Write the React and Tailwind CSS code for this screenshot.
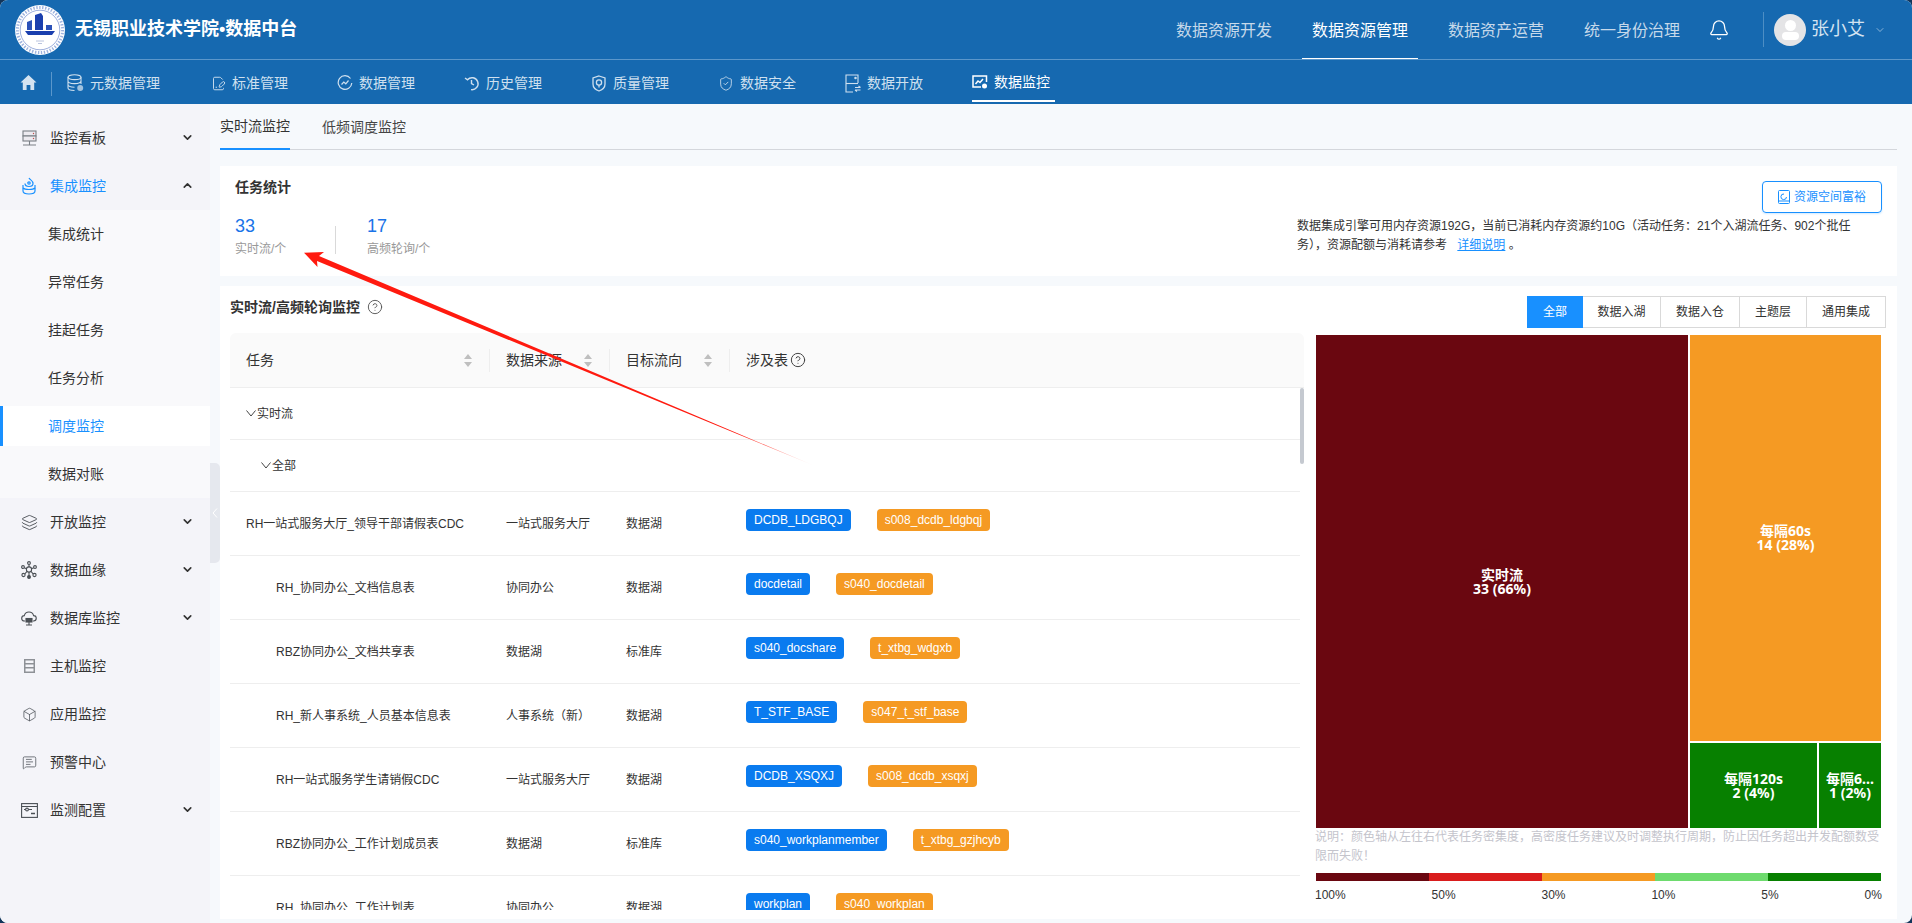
import React from 'react'
import { Bell, Box, ChevronDown, ChevronUp, CircleHelp, FilePenLine, Layers, MessageSquareText, ShieldCheck } from 'lucide-react'

const HomeIcon = () => (
    <svg width="17" height="17" viewBox="0 0 17 17" fill="#d4e3f1">
        <path d="M8.5 1 L16.5 8.6 H14.2 V16 H10.4 V11 H6.6 V16 H2.8 V8.6 H.5 Z" />
    </svg>
)
const DbIcon = () => (
    <svg width="17" height="18" viewBox="0 0 17 18" fill="none" stroke="currentColor" strokeWidth="1.1">
        <ellipse cx="7.5" cy="3.2" rx="6.5" ry="2.4" />
        <path d="M1 3.2 V14 C1 15.5 4 16.5 7.5 16.5 M14 3.2 V10 M1 7 C1 8.6 4 9.6 7.5 9.6 C11 9.6 14 8.6 14 7 M1 10.6 C1 12.2 4 13.2 7.5 13.2" />
        <circle cx="13.2" cy="14" r="3" fill="currentColor" stroke="none" opacity=".75" />
    </svg>
)
const PulseIcon = () => (
    <svg width="16" height="16" viewBox="0 0 16 16" fill="none" stroke="currentColor" strokeWidth="1.2">
        <path d="M13.5 3.5 A6.8 6.8 0 1 0 14.8 8" />
        <path d="M4.5 9.5 L6.8 7 L8.8 8.8 L11.5 5.5" />
    </svg>
)
const HistoryIcon = () => (
    <svg width="16" height="16" viewBox="0 0 16 16" fill="none" stroke="currentColor" strokeWidth="1.4">
        <path d="M1 3 L3.5 4.8 A6 6 0 1 1 7 14.6" />
        <path d="M7.5 5 V8.5 L10 10" />
    </svg>
)
const ShieldIcon = () => (
    <svg width="16" height="17" viewBox="0 0 16 17" fill="none" stroke="currentColor" strokeWidth="1.3">
        <path d="M8 1 L14 3 V9 C14 12.5 11 15 8 16 C5 15 2 12.5 2 9 V3 Z" />
        <circle cx="8" cy="7.5" r="2.6" />
        <path d="M8 10 V12.5" />
    </svg>
)
const OpenIcon = () => (
    <svg width="16" height="19" viewBox="0 0 16 19" fill="none" stroke="currentColor" strokeWidth="1.1">
        <path d="M13 9 V1 H1 V18 H8" />
        <path d="M1 9.5 H13" />
        <path d="M10 13.5 H15.5 M15.5 16 H10 M13.5 12 L15.5 13.5 M12 17.5 L10 16" />
        <circle cx="10.5" cy="4" r=".7" fill="currentColor" />
    </svg>
)
const ScreenIcon = () => (
    <svg width="16" height="15" viewBox="0 0 16 15" fill="none" stroke="currentColor" strokeWidth="1.5">
        <path d="M9 12 H1 V1 H14.5 V7" />
        <path d="M3.5 9 L6 6 L8 7.5 L11 4" />
        <circle cx="12.5" cy="11" r="2.5" fill="currentColor" stroke="none" />
    </svg>
)
const MonitorIcon = () => (
    <svg width="15" height="17" viewBox="0 0 15 17" fill="none" stroke="#7a7f86" strokeWidth="1.1">
        <rect x="1" y="1" width="13" height="5" fill="#eceaf0" />
        <rect x="1" y="6" width="13" height="5" fill="#eceaf0" />
        <path d="M7.5 11 V15 M1 15 H14" />
        <circle cx="11.5" cy="3.5" r=".7" fill="#c0504d" stroke="none" />
        <circle cx="11.5" cy="8.5" r=".7" fill="#c0504d" stroke="none" />
    </svg>
)
const IntegrationIcon = () => (
    <svg width="14" height="18" viewBox="0 0 14 18" fill="none" stroke="#1890ff" strokeWidth="1.2">
        <path d="M7 1 C8 3 11 3.5 11 6.5 C11 8.5 9 9.5 7 9.5 C5 9.5 3 8.5 3 6.5" />
        <circle cx="7" cy="6" r="1.2" />
        <path d="M1 8 V14 C1 16 4 17 7 17 C10 17 13 16 13 14 V8" />
        <path d="M1 11 C3 13 11 13 13 11" />
    </svg>
)
const LineageIcon = () => (
    <svg width="16" height="18" viewBox="0 0 16 18" fill="none" stroke="#4a4f55" strokeWidth="1.1">
        <circle cx="8" cy="8.5" r="2.6" />
        <circle cx="8" cy="2" r="1.4" />
        <circle cx="2" cy="6" r="1.4" />
        <circle cx="14" cy="6" r="1.4" />
        <circle cx="2.5" cy="14" r="1.6" />
        <circle cx="13.5" cy="14" r="1.6" />
        <circle cx="8" cy="16" r="1.4" fill="#4a4f55" />
        <path d="M8 3.4 V6 M3.2 6.8 L5.6 7.7 M12.8 6.8 L10.4 7.7 M3.8 13 L6 10.4 M12.2 13 L10 10.4 M8 11 V14.6" />
    </svg>
)
const CloudIcon = () => (
    <svg width="16" height="16" viewBox="0 0 16 16" fill="none" stroke="#4a4f55" strokeWidth="1.1">
        <path d="M4 11 H3.5 A2.7 2.7 0 0 1 3.3 5.6 A4.8 4.8 0 0 1 12.6 5.6 A2.7 2.7 0 0 1 12.5 11 H12" />
        <rect x="5" y="8.5" width="6" height="3.5" fill="#4a4f55" />
        <path d="M5 15 H11 M8 12 V15" />
    </svg>
)
const HostIcon = () => (
    <svg width="11" height="14" viewBox="0 0 11 14" fill="#8e9197">
        <path d="M0 0 H11 V14 H0 Z M1.5 1.5 V4 H9.5 V1.5 Z M1.5 5.5 V8 H9.5 V5.5 Z M1.5 9.5 V12.5 H9.5 V9.5 Z" fillRule="evenodd" />
    </svg>
)
const ConfigIcon = () => (
    <svg width="17" height="15" viewBox="0 0 17 15" fill="none" stroke="#4a4f55" strokeWidth="1.1">
        <rect x=".6" y=".6" width="15.8" height="13.8" />
        <path d="M.6 3.5 H16.4 M3 6.5 H11" />
        <circle cx="6" cy="6.5" r="1.4" fill="#f4f4f9" />
        <path d="M10 10.5 H14" strokeWidth="1.6" />
    </svg>
)
const Logo = () => (
    <svg width="50" height="50" viewBox="0 0 50 50">
        <circle cx="25" cy="25" r="25" fill="#fff" />
        <circle cx="25" cy="25" r="22.6" fill="none" stroke="#9db2de" strokeWidth="3" strokeDasharray="1.4 1.6" />
        <circle cx="25" cy="25" r="19.8" fill="#fff" stroke="#3b5fb8" strokeWidth=".5" />
        <path d="M20 10 L26 8 L28 11 V25 H20 Z" fill="#1a3fae" />
        <path d="M12 17 L17 15 V25 H12 Z" fill="#2c52b8" />
        <path d="M31 20 H37 V25 H31 Z" fill="#2c52b8" />
        <path d="M10 26 H40 L37 30 H13 Z" fill="#1a3fae" />
        <path d="M21 36 H29 M23 38.5 H27" stroke="#a8b5d6" strokeWidth=".8" />
    </svg>
)

const topNav = ['数据资源开发', '数据资源管理', '数据资产运营', '统一身份治理']

const subNav = [
    { title: '标准管理', icon: <FilePenLine size={15} strokeWidth={1.5} /> },
    { title: '数据管理', icon: <PulseIcon /> },
    { title: '历史管理', icon: <HistoryIcon /> },
    { title: '质量管理', icon: <ShieldIcon /> },
    { title: '数据安全', icon: <ShieldCheck size={17} strokeWidth={1.3} /> },
    { title: '数据开放', icon: <OpenIcon /> },
]

const subMenu = ['集成统计', '异常任务', '挂起任务', '任务分析', '调度监控', '数据对账']

const menuBottom = [
    { title: '开放监控', icon: <Layers size={17} strokeWidth={1.3} color="#4a4f55" />, arrow: true },
    { title: '数据血缘', icon: <LineageIcon />, arrow: true },
    { title: '数据库监控', icon: <CloudIcon />, arrow: true },
    { title: '主机监控', icon: <HostIcon /> },
    { title: '应用监控', icon: <Box size={15} strokeWidth={1.2} color="#4a4f55" /> },
    { title: '预警中心', icon: <MessageSquareText size={15} strokeWidth={1.2} color="#4a4f55" /> },
    { title: '监测配置', icon: <ConfigIcon />, arrow: true },
]

const rows = [
    { name: 'RH一站式服务大厅_领导干部请假表CDC', indent: false, from: '一站式服务大厅', to: '数据湖', a: 'DCDB_LDGBQJ', b: 's008_dcdb_ldgbqj' },
    { name: 'RH_协同办公_文档信息表', indent: true, from: '协同办公', to: '数据湖', a: 'docdetail', b: 's040_docdetail' },
    { name: 'RBZ协同办公_文档共享表', indent: true, from: '数据湖', to: '标准库', a: 's040_docshare', b: 't_xtbg_wdgxb' },
    { name: 'RH_新人事系统_人员基本信息表', indent: true, from: '人事系统（新）', to: '数据湖', a: 'T_STF_BASE', b: 's047_t_stf_base' },
    { name: 'RH一站式服务学生请销假CDC', indent: true, from: '一站式服务大厅', to: '数据湖', a: 'DCDB_XSQXJ', b: 's008_dcdb_xsqxj' },
    { name: 'RBZ协同办公_工作计划成员表', indent: true, from: '数据湖', to: '标准库', a: 's040_workplanmember', b: 't_xtbg_gzjhcyb' },
    { name: 'RH_协同办公_工作计划表', indent: true, from: '协同办公', to: '数据湖', a: 'workplan', b: 's040_workplan' },
]

const SortIcon = () => (
    <svg width="8" height="13" viewBox="0 0 8 13" fill="#bfbfbf">
        <path d="M4 0 L8 5 H0 Z M4 13 L0 8 H8 Z" />
    </svg>
)

const TreeArrow = () => (
    <svg width="10" height="7" viewBox="0 0 10 7" fill="none" stroke="#444" strokeWidth="1">
        <path d="M.5 .5 L5 6 L9.5 .5" />
    </svg>
)

const HeadCell = ({ title, width }) => (
    <div className={`${width} h-full flex items-center pl-4`}>
        <div className="flex-1 h-[23px] flex items-center justify-between pr-[17px] border-r border-[#eeeeee]">
            <span>{title}</span>
            <SortIcon />
        </div>
    </div>
)

const SideItem = ({ icon, title, arrow, active, open }) => (
    <div className="h-12 flex items-center relative shrink-0">
        <div className="w-[50px] flex justify-center pl-[13px] pr-[5px]">{icon}</div>
        <span className={active ? 'text-[#1890ff]' : 'text-[#333]'}>{title}</span>
        {arrow && (
            <div className="absolute left-[181px] top-[17px] text-[#333]">
                {open ? <ChevronUp size={13} strokeWidth={3} /> : <ChevronDown size={13} strokeWidth={3} />}
            </div>
        )}
    </div>
)

const App = () => {
    return (
        <div className="w-[1912px] h-[923px] bg-[#12355a] overflow-hidden [font-family:'Liberation_Sans','Noto_Sans_CJK_SC',sans-serif] text-sm text-[#333]">
            <div className="w-full h-full rounded-[8px] overflow-hidden relative bg-[#f6f9fc] flex flex-col">

                {/* top bar */}
                <div className="h-[60px] shrink-0 bg-[#1669b0] border-b border-[#5b97cb] flex items-center pl-[15px]">
                    <Logo />
                    <span className="ml-[10px] text-[18px] font-bold text-white whitespace-nowrap">无锡职业技术学院•数据中台</span>
                    <div className="ml-auto flex items-center h-full pr-[26px]">
                        <div className="flex h-full gap-5">
                            {topNav.map((item, index) => (
                                <div
                                    key={index}
                                    className={`w-[116px] h-full flex items-center justify-center pt-1 text-base border-b ${index === 1 ? 'text-white border-white' : 'text-[#c6d9ea] border-transparent'}`}
                                >
                                    {item}
                                </div>
                            ))}
                        </div>
                        <Bell size={22} strokeWidth={1.4} className="ml-[18px] text-white" />
                        <div className="ml-[33px] h-[35px] border-l border-[#4d8ec4]"></div>
                        <div className="ml-[10px] w-8 h-8 rounded-full bg-[#e4e4e6] flex flex-col items-center justify-center overflow-hidden">
                            <div className="w-[11px] h-[11px] rounded-full bg-white"></div>
                            <div className="w-[17px] h-[8px] rounded-full bg-white mt-[1px]"></div>
                        </div>
                        <span className="ml-[5px] text-[18px] text-[#d4e3f1]">张小艾</span>
                        <ChevronDown size={12} strokeWidth={1.2} className="ml-[9px] text-[#d4e3f1]" />
                    </div>
                </div>

                {/* second bar */}
                <div className="h-[44px] shrink-0 bg-[#1669b0] flex items-center pl-5 text-[#cfe0ef]">
                    <HomeIcon />
                    <div className="ml-[14px] h-6 mt-1 border-l border-[#5b97cb]"></div>
                    <div className="ml-[15px] self-start h-[42px] w-[94px] mr-[49px] flex items-center gap-[6px] pt-1">
                        <DbIcon />
                        <span>元数据管理</span>
                    </div>
                    {subNav.map((item, index) => (
                        <div key={index} className="self-start h-[42px] w-[78px] mr-[49px] flex items-center gap-[6px] pt-1">
                            <div className="w-4 flex justify-center shrink-0">{item.icon}</div>
                            <span>{item.title}</span>
                        </div>
                    ))}
                    <div className="self-start h-[42px] w-[83px] flex items-center gap-[6px] pt-1 text-white border-b-2 border-white">
                        <div className="w-4 flex justify-center shrink-0"><ScreenIcon /></div>
                        <span>数据监控</span>
                    </div>
                </div>

                <div className="flex-1 min-h-0 flex relative">
                    {/* sidebar */}
                    <div className="w-[210px] shrink-0 bg-[#f4f4f9] pt-[10px] flex flex-col">
                        <SideItem icon={<MonitorIcon />} title="监控看板" arrow />
                        <SideItem icon={<IntegrationIcon />} title="集成监控" arrow active open />
                        <div className="bg-[#f9f9fb]">
                            {subMenu.map((item, index) => (
                                <div key={index} className="h-12 flex items-center py-1">
                                    <div className={`w-full h-10 flex items-center ${item === '调度监控' ? 'bg-white border-l-[3px] border-[#1890ff] pl-[45px] text-[#1890ff]' : 'pl-[48px] text-[#333]'}`}>
                                        {item}
                                    </div>
                                </div>
                            ))}
                        </div>
                        {menuBottom.map((item, index) => (
                            <SideItem key={index} icon={item.icon} title={item.title} arrow={item.arrow} />
                        ))}
                    </div>

                    {/* collapse handle */}
                    <div className="absolute left-[210px] top-[359px] w-[10px] h-[100px] bg-[#e5e8ee] rounded-r-[5px] flex items-center justify-center">
                        <svg width="6" height="10" viewBox="0 0 6 10" fill="none" stroke="#fff" strokeWidth="1">
                            <path d="M5 .5 L1 5 L5 9.5" />
                        </svg>
                    </div>

                    {/* main */}
                    <div className="flex-1 min-w-0 pl-[10px] pr-[15px] flex flex-col">
                        <div className="h-[46px] shrink-0 flex gap-8 border-b border-[#d4d7dc]">
                            <div className="h-[46px] flex items-center border-b-2 border-[#1890ff] text-[#333]">实时流监控</div>
                            <div className="h-[46px] flex items-center text-[#444]">低频调度监控</div>
                        </div>

                        {/* stats */}
                        <div className="mt-4 h-[110px] shrink-0 bg-white px-[15px] flex justify-between">
                            <div className="pt-[11px]">
                                <div className="font-bold text-sm leading-5 text-[#333]">任务统计</div>
                                <div className="flex mt-[17px]">
                                    <div className="w-[100px]">
                                        <div className="text-[18px] leading-6 text-[#1a73e8]">33</div>
                                        <div className="mt-[3px] text-xs leading-4 text-[#999]">实时流/个</div>
                                    </div>
                                    <div className="self-end h-7 mb-[3px] border-l border-[#d9d9d9]"></div>
                                    <div className="ml-[31px]">
                                        <div className="text-[18px] leading-6 text-[#1a73e8]">17</div>
                                        <div className="mt-[3px] text-xs leading-4 text-[#999]">高频轮询/个</div>
                                    </div>
                                </div>
                            </div>
                            <div className="w-[585px] pt-[15px] flex flex-col">
                                <button className="self-end w-[120px] h-8 rounded-[4px] border border-[#1890ff] flex items-center justify-center gap-1 text-xs text-[#1890ff] shadow-[0_1px_2px_rgba(24,144,255,0.2)]">
                                    <svg width="12" height="14" viewBox="0 0 12 14" fill="none" stroke="#1890ff" strokeWidth="1">
                                        <rect x=".5" y=".5" width="11" height="13" rx="1" />
                                        <path d="M8.5 7 A2.8 2.8 0 1 1 6 4 M.5 11 H11.5" />
                                    </svg>
                                    资源空间富裕
                                </button>
                                <p className="mt-1 text-xs leading-[19px] text-[#333] whitespace-nowrap">
                                    数据集成引擎可用内存资源192G，当前已消耗内存资源约10G（活动任务：21个入湖流任务、902个批任<br />
                                    务），资源配额与消耗请参考 <span className="ml-[7px] text-[#1890ff] underline">详细说明</span> 。
                                </p>
                            </div>
                        </div>

                        {/* monitor card */}
                        <div className="mt-[10px] h-[633px] shrink-0 bg-white flex overflow-hidden">
                            <div className="ml-[10px] w-[1074px] shrink-0">
                                <div className="h-[47px] flex items-center gap-[7px] font-bold text-sm pb-[5px]">
                                    实时流/高频轮询监控
                                    <CircleHelp size={16} strokeWidth={1.4} className="text-[#555]" />
                                </div>

                                {/* table head */}
                                <div className="h-[55px] bg-[#fafafa] rounded-t-[6px] border-b border-[#eeeeee] flex items-center">
                                    <HeadCell title="任务" width="w-[260px]" />
                                    <HeadCell title="数据来源" width="w-[120px]" />
                                    <HeadCell title="目标流向" width="w-[120px]" />
                                    <div className="pl-4 flex items-center gap-[2px]">
                                        涉及表
                                        <CircleHelp size={16} strokeWidth={1.5} className="text-[#444]" />
                                    </div>
                                </div>

                                {/* table body */}
                                <div className="h-[522px] overflow-hidden flex text-xs">
                                    <div className="flex-1 min-w-0">
                                        <div className="h-[52px] border-b border-[#eeeeee] flex items-center pl-4 gap-[1px]">
                                            <TreeArrow />
                                            <span>实时流</span>
                                        </div>
                                        <div className="h-[52px] border-b border-[#eeeeee] flex items-center pl-[31px] gap-[1px]">
                                            <TreeArrow />
                                            <span>全部</span>
                                        </div>
                                        {rows.map((row, index) => (
                                            <div key={index} className="h-16 shrink-0 border-b border-[#eeeeee] flex items-center">
                                                <div className={`w-[260px] ${row.indent ? 'pl-[46px]' : 'pl-4'}`}>{row.name}</div>
                                                <div className="w-[120px] pl-4">{row.from}</div>
                                                <div className="w-[120px] pl-4">{row.to}</div>
                                                <div className="pl-4 flex gap-[26px] mb-2">
                                                    <span className="h-[22px] px-2 rounded-[4px] bg-[#0a7bef] text-white flex items-center">{row.a}</span>
                                                    <span className="h-[22px] px-2 rounded-[4px] bg-[#f59a23] text-white flex items-center">{row.b}</span>
                                                </div>
                                            </div>
                                        ))}
                                    </div>
                                    <div className="w-1 shrink-0">
                                        <div className="h-[76px] rounded-[2px] bg-[#c5c9d0]"></div>
                                    </div>
                                </div>
                            </div>

                            {/* chart */}
                            <div className="ml-3 w-[565px] shrink-0 pt-[10px] text-xs">
                                <div className="flex justify-end w-[570px] h-8">
                                    <div className="w-[56px] flex items-center justify-center bg-[#1890ff] text-white">全部</div>
                                    <div className="w-[78px] flex items-center justify-center border border-l-0 border-[#d9d9d9]">数据入湖</div>
                                    <div className="w-[79px] flex items-center justify-center border border-l-0 border-[#d9d9d9]">数据入仓</div>
                                    <div className="w-[67px] flex items-center justify-center border border-l-0 border-[#d9d9d9]">主题层</div>
                                    <div className="w-[79px] flex items-center justify-center border border-l-0 border-[#d9d9d9]">通用集成</div>
                                </div>

                                <div className="mt-[7px] h-[493px] flex gap-[2px] text-white text-center font-bold text-sm leading-[14px] [font-family:'Noto_Sans','Noto_Sans_CJK_SC',sans-serif]">
                                    <div className="w-[372px] bg-[#6a0710] flex flex-col items-center justify-center">
                                        <span>实时流</span>
                                        <span>33 (66%)</span>
                                    </div>
                                    <div className="w-[191px] flex flex-col gap-[2px]">
                                        <div className="h-[406px] bg-[#f59a23] flex flex-col items-center justify-center">
                                            <span>每隔60s</span>
                                            <span>14 (28%)</span>
                                        </div>
                                        <div className="flex-1 flex gap-[2px]">
                                            <div className="w-[127px] bg-[#078000] flex flex-col items-center justify-center">
                                                <span>每隔120s</span>
                                                <span>2 (4%)</span>
                                            </div>
                                            <div className="flex-1 bg-[#078000] flex flex-col items-center justify-center whitespace-nowrap">
                                                <span>每隔6...</span>
                                                <span>1 (2%)</span>
                                            </div>
                                        </div>
                                    </div>
                                </div>

                                <p className="w-[566px] -ml-px leading-[19px] text-[#c4c4cc]">
                                    说明：颜色轴从左往右代表任务密集度，高密度任务建议及时调整执行周期，防止因任务超出并发配额数受限而失败！
                                </p>

                                <div className="mt-[7px] h-2 flex">
                                    <div className="flex-1 bg-[#6a0710]"></div>
                                    <div className="flex-1 bg-[#d91d1d]"></div>
                                    <div className="flex-1 bg-[#f59a23]"></div>
                                    <div className="flex-1 bg-[#6edb6e]"></div>
                                    <div className="flex-1 bg-[#078000]"></div>
                                </div>
                                <div className="mt-[7px] -ml-px w-[567px] flex justify-between leading-[14px] text-[#333]">
                                    <span>100%</span>
                                    <span>50%</span>
                                    <span>30%</span>
                                    <span>10%</span>
                                    <span>5%</span>
                                    <span>0%</span>
                                </div>
                            </div>
                        </div>
                    </div>
                </div>

                {/* red annotation arrow */}
                <svg className="absolute left-0 top-0 pointer-events-none" width="1912" height="923" viewBox="0 0 1912 923">
                    <defs>
                        <linearGradient id="arrowFade" gradientUnits="userSpaceOnUse" x1="304" y1="252.7" x2="815" y2="466">
                            <stop offset="0" stopColor="#ff1a0f" />
                            <stop offset="0.85" stopColor="#ff1a0f" />
                            <stop offset="1" stopColor="#ff1a0f" stopOpacity="0" />
                        </linearGradient>
                    </defs>
                    <polygon
                        points="304,252.7 324,252 319,256 815,466 317,261 317.5,267"
                        fill="url(#arrowFade)"
                    />
                </svg>
            </div>
        </div>
    )
}

export default App
